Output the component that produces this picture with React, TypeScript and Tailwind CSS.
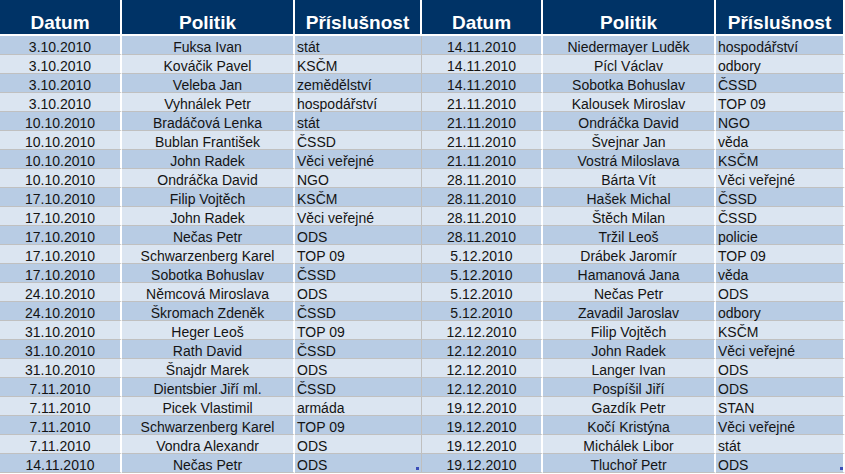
const left: [string, string, string][] = [
  ['3.10.2010', 'Fuksa Ivan', 'stát'],
  ['3.10.2010', 'Kováčik Pavel', 'KSČM'],
  ['3.10.2010', 'Veleba Jan', 'zemědělství'],
  ['3.10.2010', 'Vyhnálek Petr', 'hospodářství'],
  ['10.10.2010', 'Bradáčová Lenka', 'stát'],
  ['10.10.2010', 'Bublan František', 'ČSSD'],
  ['10.10.2010', 'John Radek', 'Věci veřejné'],
  ['10.10.2010', 'Ondráčka David', 'NGO'],
  ['17.10.2010', 'Filip Vojtěch', 'KSČM'],
  ['17.10.2010', 'John Radek', 'Věci veřejné'],
  ['17.10.2010', 'Nečas Petr', 'ODS'],
  ['17.10.2010', 'Schwarzenberg Karel', 'TOP 09'],
  ['17.10.2010', 'Sobotka Bohuslav', 'ČSSD'],
  ['24.10.2010', 'Němcová Miroslava', 'ODS'],
  ['24.10.2010', 'Škromach Zdeněk', 'ČSSD'],
  ['31.10.2010', 'Heger Leoš', 'TOP 09'],
  ['31.10.2010', 'Rath David', 'ČSSD'],
  ['31.10.2010', 'Šnajdr Marek', 'ODS'],
  ['7.11.2010', 'Dientsbier Jiří ml.', 'ČSSD'],
  ['7.11.2010', 'Picek Vlastimil', 'armáda'],
  ['7.11.2010', 'Schwarzenberg Karel', 'TOP 09'],
  ['7.11.2010', 'Vondra Alexandr', 'ODS'],
  ['14.11.2010', 'Nečas Petr', 'ODS'],
];

const right: [string, string, string][] = [
  ['14.11.2010', 'Niedermayer Luděk', 'hospodářství'],
  ['14.11.2010', 'Pícl Václav', 'odbory'],
  ['14.11.2010', 'Sobotka Bohuslav', 'ČSSD'],
  ['21.11.2010', 'Kalousek Miroslav', 'TOP 09'],
  ['21.11.2010', 'Ondráčka David', 'NGO'],
  ['21.11.2010', 'Švejnar Jan', 'věda'],
  ['21.11.2010', 'Vostrá Miloslava', 'KSČM'],
  ['28.11.2010', 'Bárta Vít', 'Věci veřejné'],
  ['28.11.2010', 'Hašek Michal', 'ČSSD'],
  ['28.11.2010', 'Štěch Milan', 'ČSSD'],
  ['28.11.2010', 'Tržil Leoš', 'policie'],
  ['5.12.2010', 'Drábek Jaromír', 'TOP 09'],
  ['5.12.2010', 'Hamanová Jana', 'věda'],
  ['5.12.2010', 'Nečas Petr', 'ODS'],
  ['5.12.2010', 'Zavadil Jaroslav', 'odbory'],
  ['12.12.2010', 'Filip Vojtěch', 'KSČM'],
  ['12.12.2010', 'John Radek', 'Věci veřejné'],
  ['12.12.2010', 'Langer Ivan', 'ODS'],
  ['12.12.2010', 'Pospíšil Jiří', 'ODS'],
  ['19.12.2010', 'Gazdík Petr', 'STAN'],
  ['19.12.2010', 'Kočí Kristýna', 'Věci veřejné'],
  ['19.12.2010', 'Michálek Libor', 'stát'],
  ['19.12.2010', 'Tluchoř Petr', 'ODS'],
];

const headers = ['Datum', 'Politik', 'Příslušnost', 'Datum', 'Politik', 'Příslušnost'];
const headWidths = ['w-[122px] border-r-2', 'w-[173px] border-r-2', 'w-[127px] border-r-2', 'w-[121px] border-r-2', 'w-[173px] border-r-2', 'w-[129px] border-r-2'];

export default function App() {
  return (
    <div className="w-[845px] h-[474px] overflow-hidden bg-white text-[#141414]" style={{ fontFamily: '"Liberation Sans", Arial, sans-serif' }}>
      {/* Header */}
      <div className="flex h-[36px] border-b-2 border-white">
        {headers.map((h, i) => (
          <div
            key={i}
            className={`${headWidths[i]} border-white bg-[#003366] text-white font-bold text-[19px] leading-[22px] flex items-end justify-center`}
          >
            {h}
          </div>
        ))}
      </div>

      {/* Rows */}
      {left.map((l, i) => {
        const r = right[i];
        const bg = i % 2 === 0 ? 'bg-[#b8cce4]' : 'bg-[#dbe5f1]';
        const last = i === left.length - 1;
        return (
          <div key={i} className={`flex h-[19px] ${bg}`}>
            <div className="w-[122px] border-r-2 border-white border-b border-b-[#c0c0c0] text-[14px] leading-[14px] flex items-end justify-center">{l[0]}</div>
            <div className="w-[173px] border-r-2 border-white border-b border-b-[#c0c0c0] text-[14px] leading-[14px] flex items-end justify-center whitespace-nowrap">{l[1]}</div>
            <div className="relative w-[127px] border-r border-r-[#bfbfbf] border-b border-b-[#c0c0c0] text-[14px] leading-[14px] flex items-end pl-[2px] whitespace-nowrap">
              {l[2]}
              {last && <span className="absolute right-[2px] bottom-[2px] w-[3px] h-[3px] bg-[#3a4db8]" />}
            </div>
            <div className="w-[121px] border-r-2 border-white border-b border-b-[#c0c0c0] text-[14px] leading-[14px] flex items-end justify-center">{r[0]}</div>
            <div className="w-[173px] border-r-2 border-white border-b border-b-[#c0c0c0] text-[14px] leading-[14px] flex items-end justify-center whitespace-nowrap">{r[1]}</div>
            <div className="relative w-[129px] border-r-2 border-white border-b border-b-[#c0c0c0] text-[14px] leading-[14px] flex items-end pl-[2px] whitespace-nowrap">
              {r[2]}
              {last && <span className="absolute right-0 bottom-[2px] w-[3px] h-[3px] bg-[#3a4db8]" />}
            </div>
          </div>
        );
      })}
    </div>
  );
}
